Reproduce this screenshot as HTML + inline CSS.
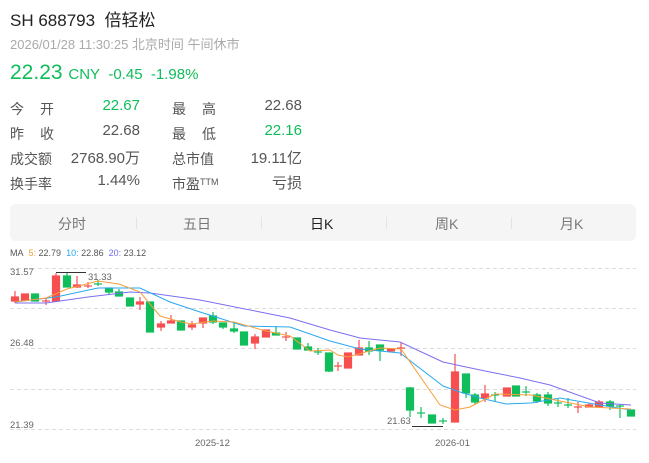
<!DOCTYPE html>
<html><head><meta charset="utf-8"><style>
body{margin:0;width:649px;height:463px;background:#fff;font-family:"Liberation Sans","Noto Sans CJK SC",sans-serif;position:relative;overflow:hidden}
.a{position:absolute;white-space:nowrap}
.lb{color:#555;font-size:14px}
.v{color:#555;font-size:15px;text-align:right}
.g{color:#0fbd5b}
</style></head><body>
<div class="a" style="left:10px;top:6px;font-size:17px;color:#222">SH 688793&nbsp; 倍轻松</div>
<div class="a" style="left:10px;top:34px;font-size:13px;color:#aaa">2026/01/28 11:30:25 北京时间 午间休市</div>
<div class="a g" style="left:10px;top:61px;font-size:21px">22.23 <span style="font-size:15px">CNY&nbsp; -0.45&nbsp; -1.98%</span></div>

<div class="a lb" style="left:10px;top:99px;letter-spacing:16px">今开</div>
<div class="a v g" style="left:70px;width:70px;top:97px">22.67</div>
<div class="a lb" style="left:172px;top:99px;letter-spacing:16px">最高</div>
<div class="a v" style="left:230px;width:72px;top:97px">22.68</div>

<div class="a lb" style="left:10px;top:124px;letter-spacing:16px">昨收</div>
<div class="a v" style="left:70px;width:70px;top:122px">22.68</div>
<div class="a lb" style="left:172px;top:124px;letter-spacing:16px">最低</div>
<div class="a v g" style="left:230px;width:72px;top:122px">22.16</div>

<div class="a lb" style="left:10px;top:149px">成交额</div>
<div class="a v" style="left:50px;width:90px;top:147px">2768.90万</div>
<div class="a lb" style="left:172px;top:149px">总市值</div>
<div class="a v" style="left:210px;width:92px;top:147px">19.11亿</div>

<div class="a lb" style="left:10px;top:174px">换手率</div>
<div class="a v" style="left:70px;width:70px;top:172px">1.44%</div>
<div class="a lb" style="left:172px;top:174px">市盈<span style="font-size:9px;vertical-align:4px">TTM</span></div>
<div class="a v" style="left:230px;width:72px;top:172px">亏损</div>

<div class="a" style="left:10px;top:204px;width:626px;height:37px;background:#f5f5f5;border-radius:6px;font-size:14px;color:#777">
 <span class="a" style="left:48px;top:10px">分时</span>
 <span class="a" style="left:173px;top:10px">五日</span>
 <span class="a" style="left:300px;top:10px;color:#222">日K</span>
 <span class="a" style="left:425px;top:10px">周K</span>
 <span class="a" style="left:550px;top:10px">月K</span>
 <span class="a" style="left:126px;top:13px;width:1px;height:12px;background:#e4e4e4"></span>
 <span class="a" style="left:251px;top:13px;width:1px;height:12px;background:#e4e4e4"></span>
 <span class="a" style="left:376px;top:13px;width:1px;height:12px;background:#e4e4e4"></span>
 <span class="a" style="left:501px;top:13px;width:1px;height:12px;background:#e4e4e4"></span>
</div>
<div class="a" style="left:10px;top:248px;font-size:9px;color:#555">MA&nbsp; <span style="color:#f5a03c">5:</span> 22.79&nbsp; <span style="color:#2aa9f0">10:</span> 22.86&nbsp; <span style="color:#6f6ff0">20:</span> 23.12</div>

<svg class="a" style="left:0;top:0" width="649" height="463">
<g stroke="#ddd" stroke-dasharray="4,3" stroke-width="1">
<line x1="10" y1="268.5" x2="636" y2="268.5"/><line x1="10" y1="308.5" x2="636" y2="308.5"/><line x1="10" y1="348.5" x2="636" y2="348.5"/><line x1="10" y1="389.5" x2="636" y2="389.5"/><line x1="10" y1="429.5" x2="636" y2="429.5"/>
</g>
<g font-size="9.5" fill="#666" font-family="Liberation Sans,sans-serif">
<text x="10" y="275">31.57</text><text x="10" y="346">26.48</text><text x="10" y="428">21.39</text>
<text x="195" y="446">2025-12</text><text x="435" y="446">2026-01</text>
<text x="88" y="280">31.33</text><text x="387" y="424">21.63</text>
</g>
<line x1="56" y1="272.5" x2="86" y2="272.5" stroke="#333"/>
<line x1="412" y1="426.5" x2="443" y2="426.5" stroke="#333"/>
<g stroke-width="1.2">
<g fill="#f74f4f" stroke="#f74f4f">
<line x1="15" y1="291" x2="15" y2="303"/><rect x="11.5" y="297" width="7" height="4"/>
<rect x="21.5" y="294" width="7" height="6"/>
<line x1="46" y1="298" x2="46" y2="305"/><line x1="42" y1="301" x2="50" y2="301"/>
<line x1="56" y1="273" x2="56" y2="301"/><rect x="52.5" y="276" width="7" height="25"/>
<line x1="77" y1="276" x2="77" y2="288"/><rect x="73.5" y="285" width="7" height="2"/>
<line x1="88" y1="282" x2="88" y2="288"/><line x1="84" y1="286" x2="92" y2="286"/>
<line x1="140" y1="297" x2="140" y2="310"/><rect x="136.5" y="302" width="7" height="2"/>
<line x1="161" y1="321" x2="161" y2="331"/><rect x="157.5" y="324" width="7" height="3"/>
<line x1="171" y1="315" x2="171" y2="323"/><rect x="167.5" y="321" width="7" height="2"/>
<line x1="192" y1="321" x2="192" y2="330"/><rect x="188.5" y="325" width="7" height="2"/>
<line x1="203" y1="318" x2="203" y2="328"/><rect x="199.5" y="318" width="7" height="5"/>
<line x1="255" y1="334" x2="255" y2="349"/><rect x="251.5" y="337" width="7" height="6"/>
<rect x="262.5" y="330" width="7" height="7"/>
<line x1="286" y1="332" x2="286" y2="341"/><line x1="282" y1="337" x2="290" y2="337"/>
<line x1="338" y1="362" x2="338" y2="371"/><line x1="334" y1="366" x2="342" y2="366"/>
<rect x="344.5" y="353" width="7" height="15"/>
<line x1="359" y1="340" x2="359" y2="355"/><rect x="355.5" y="348" width="7" height="7"/>
<rect x="387.5" y="349" width="7" height="2"/>
<line x1="401" y1="343" x2="401" y2="356"/><line x1="397" y1="348" x2="405" y2="348"/>
<line x1="455" y1="354" x2="455" y2="422"/><rect x="451.5" y="372" width="7" height="50"/>
<line x1="485" y1="385" x2="485" y2="402"/><rect x="481.5" y="394" width="7" height="4"/>
<rect x="503.5" y="388" width="7" height="8"/>
<line x1="578" y1="402" x2="578" y2="413"/><line x1="574" y1="407" x2="582" y2="407"/>
<line x1="589" y1="403" x2="589" y2="407"/><rect x="585.5" y="405" width="7" height="2"/>
<line x1="599" y1="400" x2="599" y2="407"/><rect x="595.5" y="402" width="7" height="5"/>
</g>
<g fill="#0fbd5b" stroke="#0fbd5b">
<rect x="31.5" y="294" width="7" height="7"/>
<line x1="67" y1="273" x2="67" y2="287"/><rect x="63.5" y="276" width="7" height="11"/>
<line x1="98" y1="280" x2="98" y2="286"/><line x1="94" y1="284" x2="102" y2="284"/>
<line x1="109" y1="288" x2="109" y2="295"/><rect x="105.5" y="288" width="7" height="4"/>
<line x1="119" y1="289" x2="119" y2="296"/><rect x="115.5" y="292" width="7" height="4"/>
<rect x="126.5" y="298" width="7" height="8"/>
<rect x="146.5" y="302" width="7" height="30"/>
<rect x="177.5" y="321" width="7" height="9"/>
<line x1="213" y1="312" x2="213" y2="324"/><rect x="209.5" y="316" width="7" height="6"/>
<line x1="223" y1="323" x2="223" y2="329"/><rect x="219.5" y="323" width="7" height="4"/>
<line x1="234" y1="323" x2="234" y2="333"/><rect x="230.5" y="329" width="7" height="2"/>
<rect x="240.5" y="332" width="7" height="13"/>
<line x1="276" y1="326" x2="276" y2="335"/><rect x="272.5" y="333" width="7" height="2"/>
<rect x="293.5" y="338" width="7" height="11"/>
<line x1="308" y1="343" x2="308" y2="350"/><rect x="304.5" y="347" width="7" height="3"/>
<line x1="318" y1="348" x2="318" y2="355"/><line x1="314" y1="352" x2="322" y2="352"/>
<line x1="329" y1="353" x2="329" y2="372"/><rect x="325.5" y="353" width="7" height="18"/>
<line x1="369" y1="341" x2="369" y2="355"/><rect x="365.5" y="348" width="7" height="3"/>
<line x1="380" y1="345" x2="380" y2="361"/><rect x="376.5" y="345" width="7" height="5"/>
<line x1="410" y1="387" x2="410" y2="417"/><rect x="406.5" y="388" width="7" height="22"/>
<line x1="421" y1="407" x2="421" y2="418"/><line x1="417" y1="413" x2="425" y2="413"/>
<rect x="428.5" y="415" width="7" height="8"/>
<line x1="443" y1="418" x2="443" y2="424"/><line x1="439" y1="421" x2="447" y2="421"/>
<line x1="466" y1="374" x2="466" y2="398"/><rect x="462.5" y="374" width="7" height="19"/>
<line x1="475" y1="393" x2="475" y2="404"/><rect x="471.5" y="395" width="7" height="7"/>
<line x1="495" y1="392" x2="495" y2="402"/><line x1="491" y1="395" x2="499" y2="395"/>
<rect x="512.5" y="386" width="7" height="10"/>
<line x1="526" y1="386" x2="526" y2="396"/><line x1="522" y1="392" x2="530" y2="392"/>
<line x1="537" y1="393" x2="537" y2="403"/><rect x="533.5" y="395" width="7" height="6"/>
<line x1="548" y1="392" x2="548" y2="406"/><rect x="544.5" y="395" width="7" height="8"/>
<line x1="558" y1="399" x2="558" y2="407"/><line x1="554" y1="403" x2="562" y2="403"/>
<line x1="568" y1="398" x2="568" y2="408"/><line x1="564" y1="405" x2="572" y2="405"/>
<line x1="610" y1="400" x2="610" y2="410"/><rect x="606.5" y="402" width="7" height="4"/>
<line x1="620" y1="404" x2="620" y2="418"/><line x1="616" y1="406" x2="624" y2="406"/>
<rect x="627.5" y="410" width="7" height="6"/>
</g>
</g>
<g fill="none" stroke-width="1">
<polyline stroke="#7b6ff0" points="15,303 46,303 88,297 130,292 150,293 200,300 260,312 290,318 330,330 360,338 400,342 443,362 466,367 490,372 520,378 550,385 600,403 631,405"/>
<polyline stroke="#2aa9f0" points="15,302 56,297 98,288 140,288 170,302 200,312 244,326 290,327 330,341 360,349 400,353 443,386 460,392 480,398 506,404 531,403 560,398 600,405 631,410"/>
<polyline stroke="#f5a03c" points="15,302 46,298 67,289 98,281 119,284 140,292 160,316 181,322 192,324 213,321 234,322 266,331 290,336 310,351 330,350 338,355 348,357 380,348 401,349 440,405 455,410 470,407 495,394 531,395 560,401 590,407 631,409"/>
</g>
</svg>
</body></html>
